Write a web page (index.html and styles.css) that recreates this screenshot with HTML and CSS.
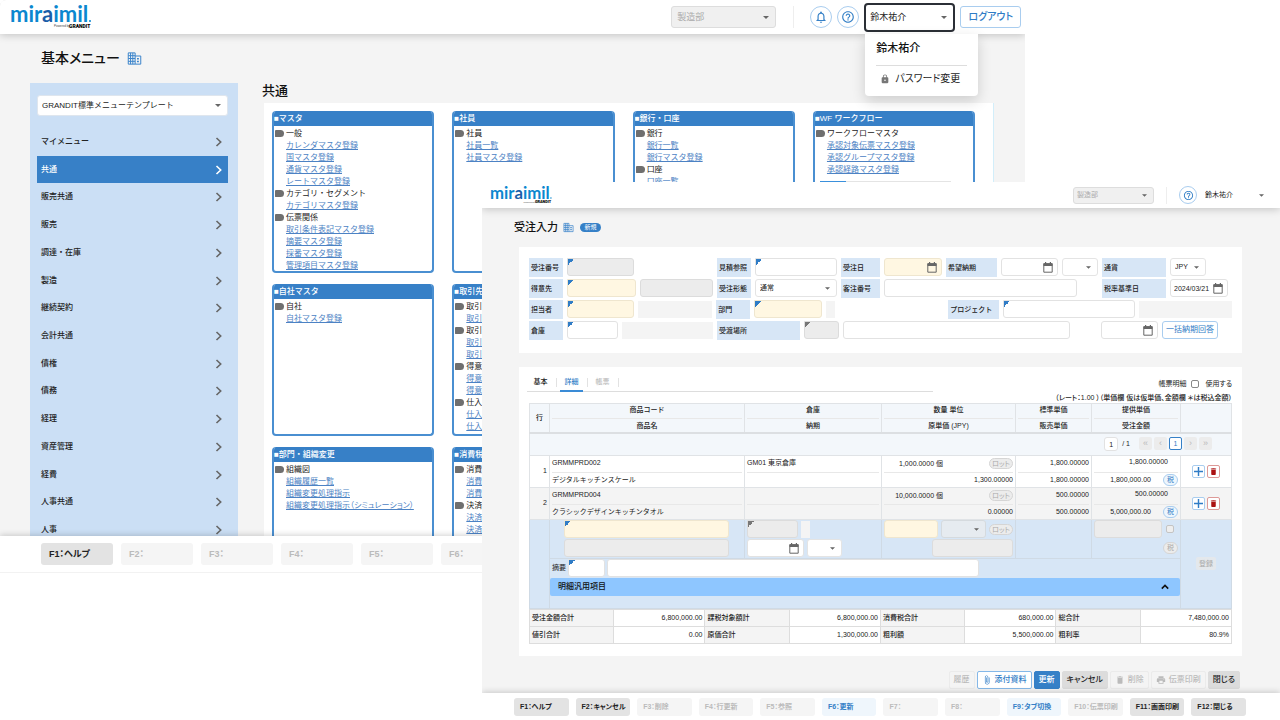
FILE: index.html
```html
<!DOCTYPE html>
<html lang="ja">
<head>
<meta charset="utf-8">
<title>miraimil</title>
<link rel="stylesheet" href="styles.css">
</head>
<body>
<svg class="defs" aria-hidden="true">
  <symbol id="logo" viewBox="0 -4 84 34">
    <text x="0" y="18" class="logo-word">mir<tspan class="logo-a">a</tspan>imil</text>
    <circle cx="80" cy="17" r="1" fill="#0b87cf"/>
    <text x="44" y="23" class="logo-by">Powered by</text>
    <text x="59" y="24" class="logo-brand">GRANDIT</text>
  </symbol>
  <symbol id="building" viewBox="0 0 24 24">
    <path fill="none" stroke="currentColor" stroke-width="1.600" d="M2 3h11v18H2zM13 8h9v13h-9M2 7.500h11M2 12h11M2 16.500h11M5.700 3v18M9.300 3v18"/>
    <path fill="currentColor" d="M16 11h3v2.500h-3zM16 15.500h3V18h-3z"/>
  </symbol>
  <symbol id="bell" viewBox="0 0 24 24">
    <path fill="currentColor" d="M12 22c1.100 0 2-.9 2-2h-4c0 1.100.9 2 2 2zm6-6v-5c0-3.070-1.630-5.640-4.500-6.320V4c0-.83-.67-1.500-1.500-1.500s-1.500.67-1.500 1.500v.68C7.640 5.360 6 7.920 6 11v5l-2 2v1h16v-1l-2-2zm-2 1H8v-6c0-2.480 1.510-4.500 4-4.500s4 2.020 4 4.500v6z"/>
  </symbol>
  <symbol id="help" viewBox="0 0 24 24">
    <path fill="currentColor" d="M11 18h2v-2h-2v2zm1-16C6.480 2 2 6.480 2 12s4.480 10 10 10 10-4.480 10-10S17.520 2 12 2zm0 18c-4.410 0-8-3.590-8-8s3.590-8 8-8 8 3.590 8 8-3.590 8-8 8zm0-14c-2.210 0-4 1.790-4 4h2c0-1.100.9-2 2-2s2 .9 2 2c0 2-3 1.750-3 5h2c0-2.250 3-2.500 3-5 0-2.210-1.790-4-4-4z"/>
  </symbol>
  <symbol id="lock" viewBox="0 0 24 24">
    <path fill="currentColor" d="M18 8h-1V6c0-2.760-2.240-5-5-5S7 3.240 7 6v2H6c-1.100 0-2 .9-2 2v10c0 1.100.9 2 2 2h12c1.100 0 2-.9 2-2V10c0-1.100-.9-2-2-2zm-6 9c-1.100 0-2-.9-2-2s.9-2 2-2 2 .9 2 2-.9 2-2 2zm3.100-9H8.900V6c0-1.710 1.390-3.100 3.100-3.100s3.100 1.390 3.100 3.100v2z"/>
  </symbol>
  <symbol id="chev" viewBox="0 0 10 10"><path fill="none" stroke="currentColor" stroke-width="1.600" d="M2.500 1l4.200 4-4.200 4"/></symbol>
  <symbol id="up" viewBox="0 0 10 10"><path fill="none" stroke="currentColor" stroke-width="2" d="M1 7l4-4 4 4"/></symbol>
  <symbol id="plus" viewBox="0 0 10 10"><path fill="none" stroke="currentColor" stroke-width="1.600" d="M5 0v10M0 5h10"/></symbol>
  <symbol id="trash" viewBox="0 0 24 24"><path fill="currentColor" d="M6 19c0 1.100.9 2 2 2h8c1.100 0 2-.9 2-2V7H6v12zM19 4h-3.500l-1-1h-5l-1 1H5v2h14V4z"/></symbol>
  <symbol id="clip" viewBox="0 0 24 24"><path fill="currentColor" d="M16.500 6v11.500c0 2.210-1.790 4-4 4s-4-1.790-4-4V5c0-1.380 1.120-2.500 2.500-2.500s2.500 1.120 2.500 2.500v10.500c0 .55-.45 1-1 1s-1-.45-1-1V6H10v9.500c0 1.380 1.120 2.500 2.500 2.500s2.500-1.120 2.500-2.500V5c0-2.210-1.790-4-4-4S7 2.790 7 5v12.500c0 3.040 2.460 5.500 5.500 5.500s5.500-2.460 5.500-5.500V6h-1.500z"/></symbol>
  <symbol id="print" viewBox="0 0 24 24"><path fill="currentColor" d="M19 8H5c-1.660 0-3 1.340-3 3v6h4v4h12v-4h4v-6c0-1.660-1.340-3-3-3zm-3 11H8v-5h8v5zm3-7c-.55 0-1-.45-1-1s.45-1 1-1 1 .45 1 1-.45 1-1 1zm-1-9H6v4h12V3z"/></symbol>
</svg>

<section class="window menu-window">
  <header class="bar">
    <svg class="logo" role="img" aria-label="miraimil Powered by GRANDIT"><use href="#logo"/></svg>
    <select class="dept" aria-label="部門" disabled><option>製造部</option></select>
    <span class="rule"></span>
    <button class="round" aria-label="通知"><svg><use href="#bell"/></svg></button>
    <button class="round" aria-label="ヘルプ"><svg><use href="#help"/></svg></button>
    <div class="user">
      <select class="user-select" aria-label="ユーザー"><option>鈴木祐介</option></select>
      <div class="popup">
        <p class="popup-name">鈴木祐介</p>
        <button class="popup-item"><svg><use href="#lock"/></svg>パスワード変更</button>
      </div>
    </div>
    <button class="logout">ログアウト</button>
  </header>
  <div class="page-title"><h1>基本メニュー</h1><svg><use href="#building"/></svg></div>
  <div class="menu-body">
    <nav class="side">
      <select class="template" aria-label="メニューテンプレート"><option>GRANDIT標準メニューテンプレート</option></select>
      <div class="side-list">
        <button>マイメニュー<svg><use href="#chev"/></svg></button>
        <button class="current">共通<svg><use href="#chev"/></svg></button>
        <button>販売共通<svg><use href="#chev"/></svg></button>
        <button>販売<svg><use href="#chev"/></svg></button>
        <button>調達・在庫<svg><use href="#chev"/></svg></button>
        <button>製造<svg><use href="#chev"/></svg></button>
        <button>継続契約<svg><use href="#chev"/></svg></button>
        <button>会計共通<svg><use href="#chev"/></svg></button>
        <button>債権<svg><use href="#chev"/></svg></button>
        <button>債務<svg><use href="#chev"/></svg></button>
        <button>経理<svg><use href="#chev"/></svg></button>
        <button>資産管理<svg><use href="#chev"/></svg></button>
        <button>経費<svg><use href="#chev"/></svg></button>
        <button>人事共通<svg><use href="#chev"/></svg></button>
        <button>人事<svg><use href="#chev"/></svg></button>
      </div>
    </nav>
    <main class="menu-main">
      <h2>共通</h2>
      <div class="cards">
        <section class="card"><h3>■マスタ</h3>
          <h4>一般</h4><a href="#">カレンダマスタ登録</a><a href="#">国マスタ登録</a><a href="#">通貨マスタ登録</a><a href="#">レートマスタ登録</a>
          <h4>カテゴリ・セグメント</h4><a href="#">カテゴリマスタ登録</a>
          <h4>伝票関係</h4><a href="#">取引条件表記マスタ登録</a><a href="#">摘要マスタ登録</a><a href="#">採番マスタ登録</a><a href="#">管理項目マスタ登録</a>
        </section>
        <section class="card"><h3>■社員</h3>
          <h4>社員</h4><a href="#">社員一覧</a><a href="#">社員マスタ登録</a>
        </section>
        <section class="card"><h3>■銀行・口座</h3>
          <h4>銀行</h4><a href="#">銀行一覧</a><a href="#">銀行マスタ登録</a>
          <h4>口座</h4><a href="#">口座一覧</a>
        </section>
        <section class="card"><h3>■WF ワークフロー</h3>
          <h4>ワークフローマスタ</h4><a href="#">承認対象伝票マスタ登録</a><a href="#">承認グループマスタ登録</a><a href="#">承認経路マスタ登録</a>
          <div class="track"><div class="thumb"></div></div>
        </section>
        <section class="card"><h3>■自社マスタ</h3>
          <h4>自社</h4><a href="#">自社マスタ登録</a>
        </section>
        <section class="card"><h3>■取引先</h3>
          <h4>取引</h4><a href="#">取引</a>
          <h4>取引</h4><a href="#">取引</a><a href="#">取引</a>
          <h4>得意先</h4><a href="#">得意先</a><a href="#">得意先</a>
          <h4>仕入先</h4><a href="#">仕入先</a><a href="#">仕入先</a>
        </section>
        <section class="card last-row"><h3>■部門・組織変更</h3>
          <h4>組織図</h4><a href="#">組織履歴一覧</a><a href="#">組織変更処理指示</a><a href="#" class="prop">組織変更処理指示（シミュレーション）</a>
        </section>
        <section class="card last-row second"><h3>■消費税</h3>
          <h4>消費税</h4><a href="#">消費税</a><a href="#">消費税</a>
          <h4>決済</h4><a href="#">決済</a><a href="#">決済</a>
        </section>
      </div>
    </main>
  </div>
  <footer class="keys">
    <button class="on">F1：ヘルプ</button><button disabled>F2：</button><button disabled>F3：</button><button disabled>F4：</button><button disabled>F5：</button><button disabled>F6：</button>
  </footer>
</section>

<section class="window order-window">
  <header class="bar">
    <svg class="logo" role="img" aria-label="miraimil Powered by GRANDIT"><use href="#logo"/></svg>
    <select class="dept" aria-label="部門" disabled><option>製造部</option></select>
    <span class="rule"></span>
    <button class="round" aria-label="ヘルプ"><svg><use href="#help"/></svg></button>
    <select class="user-select" aria-label="ユーザー"><option>鈴木祐介</option></select>
  </header>
  <div class="page-title"><h1>受注入力</h1><svg><use href="#building"/></svg><span class="badge">新規</span></div>

  <form class="panel head-form">
    <div class="line">
      <label class="w34" for="no">受注番号</label><input id="no" class="w67 mark off" readonly>
      <span class="w75"></span>
      <label class="w34" for="est">見積参照</label><input id="est" class="w82 mark">
      <label class="w39" for="odate">受注日</label><input id="odate" class="w58 date need">
      <label class="w51" for="due">希望納期</label><input id="due" class="w57 date"><select class="w36" aria-label="納期区分"><option></option></select>
      <label class="w64" for="cur">通貨</label><select id="cur" class="w36"><option>JPY</option></select>
      <span class="w22"></span>
    </div>
    <div class="line">
      <label class="w34" for="cust">得意先</label><input id="cust" class="w69 mark need"><input class="w73 off" aria-label="得意先名" readonly>
      <label class="w34" for="type">受注形態</label><select id="type" class="w82"><option>通常</option></select>
      <label class="w39" for="cno">客注番号</label><input id="cno" class="w193">
      <span class="w17"></span>
      <label class="w64" for="tdate">税率基準日</label><input id="tdate" class="w58 date" value="2024/03/21">
      <span class="w0"></span>
    </div>
    <div class="line">
      <label class="w34" for="staff">担当者</label><input id="staff" class="w67 mark need"><output class="w75"></output>
      <label class="w34" for="sec">部門</label><input id="sec" class="w68 mark need"><output class="w9"></output>
      <span class="w106"></span>
      <label class="w51" for="proj">プロジェクト</label><input id="proj" class="w133 mark"><output class="w93"></output>
    </div>
    <div class="line">
      <label class="w34" for="wh">倉庫</label><input id="wh" class="w51 mark"><output class="w91"></output>
      <label class="w83" for="place">受渡場所</label><input id="place" class="w35 mark off gray" readonly><input class="w227" aria-label="受渡場所名">
      <span class="w23"></span>
      <input class="w57 date" aria-label="一括納期"><button type="button" class="w56 outline">一括納期回答</button>
      <span class="w10"></span>
    </div>
  </form>

  <div class="panel detail">
    <div class="tab-row">
      <div class="tabs" role="tablist">
        <button role="tab">基本</button><button role="tab" class="active">詳細</button><button role="tab" disabled>帳票</button>
      </div>
      <label class="use">帳票明細<input type="checkbox">使用する</label>
    </div>
    <p class="rate">（レート：1.00 ）（単価欄 仮は仮単価、金額欄 ＊は税込金額）</p>
    <table class="grid">
      <colgroup><col class="c-no"><col><col class="c-wh"><col class="c-qty"><col class="c-price"><col class="c-amt"><col class="c-act"></colgroup>
      <thead>
        <tr><th>行</th>
          <th><div class="cell">商品コード</div><div class="cell">商品名</div></th>
          <th><div class="cell">倉庫</div><div class="cell">納期</div></th>
          <th><div class="cell">数量 単位</div><div class="cell">原単価 (JPY)</div></th>
          <th><div class="cell">標準単価</div><div class="cell">販売単価</div></th>
          <th><div class="cell">提供単価</div><div class="cell">受注金額</div></th>
          <th></th></tr>
      </thead>
      <tbody>
        <tr class="pager-row"><td colspan="7"><div class="pager">
          <input value="1" aria-label="ページ"><span>/ 1</span>
          <button disabled>«</button><button disabled>‹</button><button class="page">1</button><button disabled>›</button><button disabled>»</button>
        </div></td></tr>
        <tr class="item"><td class="num">1</td>
          <td><div class="cell">GRMMPRD002</div><div class="cell">デジタルキッチンスケール</div></td>
          <td><div class="cell">GM01 東京倉庫</div><div class="cell"></div></td>
          <td class="num"><div class="cell qty"><span>1,000.0000 個</span><button class="pill" disabled>ロット</button></div><div class="cell">1,300.00000</div></td>
          <td class="num"><div class="cell">1,800.00000</div><div class="cell">1,800.00000</div></td>
          <td class="num"><div class="cell unit">1,800.00000</div><div class="cell amt">1,800,000.00<button class="pill tax">税</button></div></td>
          <td><div class="acts"><button class="add" aria-label="追加"><svg><use href="#plus"/></svg></button><button class="del" aria-label="削除"><svg><use href="#trash"/></svg></button></div></td></tr>
        <tr class="item alt"><td class="num">2</td>
          <td><div class="cell">GRMMPRD004</div><div class="cell">クラシックデザインキッチンタオル</div></td>
          <td><div class="cell"></div><div class="cell"></div></td>
          <td class="num"><div class="cell qty"><span>10,000.0000 個</span><button class="pill" disabled>ロット</button></div><div class="cell">0.00000</div></td>
          <td class="num"><div class="cell">500.00000</div><div class="cell">500.00000</div></td>
          <td class="num"><div class="cell unit">500.00000</div><div class="cell amt">5,000,000.00<button class="pill tax">税</button></div></td>
          <td><div class="acts"><button class="add" aria-label="追加"><svg><use href="#plus"/></svg></button><button class="del" aria-label="削除"><svg><use href="#trash"/></svg></button></div></td></tr>
        <tr class="edit"><td rowspan="2"></td>
          <td><div class="stack code"><input class="mark need" aria-label="商品コード"><input class="off" aria-label="商品名" readonly></div></td>
          <td><div class="stack"><div class="pair"><input class="mark off gray w52" aria-label="倉庫" readonly><output class="w9"></output><span class="w67"></span></div>
            <div class="pair"><input class="date w57" aria-label="納期"><select class="w36" aria-label="納期区分"><option></option></select><span class="w34"></span></div></div></td>
          <td><div class="stack"><div class="pair"><input class="need w54" aria-label="数量"><select class="w45" aria-label="単位" disabled><option></option></select><button class="pill" disabled>ロット</button></div>
            <div class="pair"><span class="w45"></span><input class="off w82" aria-label="原単価" readonly></div></div></td>
          <td></td>
          <td><div class="stack"><div class="pair"><input class="off w69" aria-label="提供単価" readonly><input type="checkbox" aria-label="仮単価" disabled></div>
            <div class="pair end"><button class="pill tax" disabled>税</button></div></div></td>
          <td rowspan="2"><button class="regist" disabled>登録</button></td></tr>
        <tr class="edit"><td colspan="5" class="memo-cell">
          <div class="memo"><label for="memo">摘要</label><input id="memo" class="mark w37"><input class="w374" aria-label="摘要内容"><span class="w200"></span></div>
          <button class="fold">明細汎用項目<svg><use href="#up"/></svg></button></td></tr>
      </tbody>
    </table>
    <table class="totals">
      <tr><th>受注金額合計</th><td>6,800,000.00</td><th>課税対象額計</th><td>6,800,000.00</td><th>消費税合計</th><td>680,000.00</td><th>総合計</th><td>7,480,000.00</td></tr>
      <tr><th>値引合計</th><td>0.00</td><th>原価合計</th><td>1,300,000.00</td><th>粗利額</th><td>5,500,000.00</td><th>粗利率</th><td>80.9%</td></tr>
    </table>
  </div>

  <div class="commands">
    <button disabled>履歴</button>
    <button class="attach"><svg><use href="#clip"/></svg>添付資料</button>
    <button class="primary">更新</button>
    <button class="plain">キャンセル</button>
    <button disabled><svg><use href="#trash"/></svg>削除</button>
    <button disabled><svg><use href="#print"/></svg>伝票印刷</button>
    <button class="plain">閉じる</button>
  </div>
  <footer class="keys">
    <button class="on">F1：ヘルプ</button><button class="on">F2：キャンセル</button><button disabled>F3：削除</button><button disabled>F4：行更新</button><button disabled>F5：参照</button><button class="blue">F6：更新</button><button disabled>F7：</button><button disabled>F8：</button><button class="blue">F9：タブ切換</button><button disabled>F10：伝票印刷</button><button class="on">F11：画面印刷</button><button class="on">F12：閉じる</button>
  </footer>
</section>
</body>
</html>
```
FILE: styles.css
```css
* { box-sizing: border-box; }
body {
  margin: 0;
  min-height: 100vh;
  position: relative;
  overflow: hidden;
  background: #fff;
  color: #222;
  font: 8px/12px "Liberation Sans", "Noto Sans CJK JP", sans-serif;
}
h1, h2, h3, h4, p { margin: 0; font-weight: 500; }
button, input, select { font: inherit; color: inherit; margin: 0; padding: 0; min-width: 0; }
button { border: 0; background: none; white-space: nowrap; }
svg { display: block; flex: none; }
.defs { position: absolute; width: 0; height: 0; }

.logo-word { font: bold 22px Lato, sans-serif; fill: #0b87cf; }
.logo-a { fill: #1b5ea8; }
.logo-by { font: 3px "Liberation Sans", sans-serif; fill: #444; }
.logo-brand { font: 900 5px Roboto, sans-serif; fill: #000; }

select {
  appearance: none;
  border: 1px solid #ddd;
  border-radius: 3px;
  background: #fff url("data:image/svg+xml,%3Csvg xmlns='http://www.w3.org/2000/svg' viewBox='0 0 8 4'%3E%3Cpath fill='%23666' d='M0 0h8L4 4z'/%3E%3C/svg%3E") no-repeat right 6px center / 6px 3px;
}
select:disabled { background-color: #f0f0f0; color: #aaa; opacity: 1; }

/* Windows lie over each other on the desktop */
.window { position: absolute; display: flex; flex-direction: column; overflow: hidden; background: #f4f4f4; }
.menu-window { left: 0; top: 0; width: 80.1%; height: 573px; border-radius: 6px 0 0 0; border-bottom: 1px solid #f2f2f2; }
.order-window { left: 482px; right: 0; top: 182px; bottom: 0; font-size: 7px; line-height: 10px; }

.bar { display: flex; align-items: center; background: #fff; box-shadow: 0 1px 8px rgba(0, 0, 0, .22); flex: none; position: relative; }
.bar .logo { margin-right: auto; }
.rule { width: 1px; background: #eee; }
.round { display: grid; place-items: center; border: 1px solid #a9cdef; border-radius: 50%; color: #3580c7; background: #fff; }
.page-title { display: flex; align-items: center; color: #111; flex: none; }
.page-title svg { color: #3c85cb; }

/* Menu window */
.menu-window .bar { height: 34px; padding: 0 4px 0 10px; gap: 5px; }
.menu-window .logo { width: 84px; height: 34px; }
.menu-window .dept { width: 105px; height: 22px; padding-left: 5px; font-size: 9px; margin-right: 12px; }
.menu-window .rule { height: 22px; margin-right: 11px; }
.menu-window .round { width: 22px; height: 22px; }
.menu-window .round svg { width: 14px; height: 14px; }
.user { position: relative; }
.user .user-select { display: block; width: 91px; height: 29px; padding-left: 4px; font-size: 9px; border: 2px solid #2b2f36; border-radius: 4px; }
.popup { position: absolute; top: 31px; left: 1px; width: 113px; height: 62px; padding: 6px 11px; background: #fff; border-radius: 0 0 4px 4px; box-shadow: 0 5px 14px rgba(0, 0, 0, .16); }
.popup-name { font-size: 11px; line-height: 16px; padding-bottom: 9px; border-bottom: 1px solid #ddd; color: #111; }
.popup-item { display: flex; align-items: center; gap: 5px; height: 26px; padding-left: 4px; font-size: 10px; font-feature-settings: "palt"; }
.popup-item svg { width: 10px; height: 10px; color: #777; }
.logout { width: 61px; height: 22px; border: 1px solid #a9cdef; border-radius: 3px; color: #2f7cc6; font-size: 10px; font-weight: 500; font-feature-settings: "palt"; background: #fff; }
.menu-window .page-title { height: 49px; padding-left: 41px; gap: 7px; }
.menu-window h1 { font-size: 14px; line-height: 22px; padding-bottom: 2px; font-feature-settings: "palt"; }
.menu-window .page-title svg { width: 15px; height: 15px; }
.menu-body { flex: 1; min-height: 0; display: flex; gap: 24px; padding: 0 31px 0 30px; overflow: hidden; }
.side { width: 208px; flex: none; background: #cbdff5; padding: 12px 10px 0 7px; height: 470px; }
.template { width: 100%; height: 21px; padding-left: 4px; border-color: #dfe6ee; }
.side-list { display: grid; grid-auto-rows: 1fr; height: 416px; margin-top: 12px; }
.side-list button { display: flex; align-items: center; justify-content: space-between; padding: 0 4px; text-align: left; font-weight: 500; }
.side-list svg { width: 10px; height: 10px; color: #666; }
.side-list .current { background: #3780c7; color: #fff; }
.side-list .current svg { color: #fff; }
.menu-main { flex: 1; }
.menu-main h2 { font-size: 13px; line-height: 16px; padding-bottom: 4px; color: #111; }
.cards { display: grid; grid-template-columns: repeat(4, 1fr); grid-auto-rows: 152px; grid-template-rows: 162px; gap: 11px 18px; margin-left: 2px; padding: 8px 18px 0 8px; background: #fff; border-right: 1px solid #d2eefa; height: 500px; }
.card { border: 2px solid #4a8fd1; border-top: 0; border-radius: 4px; overflow: hidden; background: #fff; }
.card h3 { background: #3780c7; color: #fff; font-size: 8px; line-height: 15px; padding-left: 1px; margin: 0 -1px 2px; }
.card h4 { display: flex; align-items: center; gap: 2px; font-size: 8px; font-weight: 400; line-height: 12px; }
.card h4::before { content: ""; width: 9px; height: 7px; margin: 0 0 2px 1px; background: #6f6f6f; border-radius: 1px 4px 4px 1px; }
.card a { display: block; padding-left: 12px; color: #4c82c4; line-height: 12px; }
.prop { font-feature-settings: "palt"; }
.last-row { grid-column: 1; }
.last-row.second { grid-column: 2; }
.card:nth-child(5) { grid-column: 1; }
.track { height: 2px; background: #e4e4e4; margin: 5px 22px 0 5px; }
.thumb { width: 20%; height: 100%; background: #3a90dc; }

/* Function keys */
.keys { display: flex; flex: none; background: #fff; box-shadow: 0 -1px 6px rgba(0, 0, 0, .18); position: relative; font-feature-settings: "palt"; }
.keys button { border-radius: 3px; background: #f5f5f5; color: #bbb; text-align: left; font-weight: 700; }
.keys .on { background: #e3e3e3; color: #222; }
.keys .blue { background: #eff6fc; color: #3580c7; }
.menu-window .keys { height: 36px; padding: 7px 41px; gap: 8px; }
.menu-window .keys button { width: 72px; height: 22px; padding-left: 8px; flex: none; font-size: 9px; }
.order-window .keys { height: 27px; padding: 5px 34px 0 32px; gap: 7px; margin-top: auto; }
.order-window .keys button { flex: 1; height: 18px; padding-left: 6px; }

/* Order window */
.order-window .bar { height: 26px; padding: 0 4px 0 8px; }
.order-window .logo { width: 64px; height: 26px; }
.order-window .dept { width: 81px; height: 17px; padding-left: 3px; }
.order-window .rule { height: 17px; margin: 0 12px; }
.order-window .round { width: 18px; height: 18px; }
.order-window .round svg { width: 11px; height: 11px; }
.order-window .user-select { width: 75px; height: 18px; border: 0; padding-left: 4px; margin-left: 4px; background-position: right 12px center; }
.order-window .page-title { height: 39px; padding-left: 32px; gap: 5px; }
.order-window h1 { font-size: 11px; line-height: 16px; padding-bottom: 1px; }
.order-window .page-title svg { width: 11px; height: 11px; }
.badge { background: #3580c7; color: #fff; border-radius: 5px; width: 21px; line-height: 9px; text-align: center; font-size: 6px; margin-left: 1px; }
.panel { margin: 0 38px 0 37px; background: #fff; padding: 10px; flex: none; }
.head-form { display: grid; gap: 1px; height: 106px; align-content: start; grid-auto-rows: 20px; }
.line { display: flex; align-items: center; gap: 4px; }
.line label { background: #d7e6f6; height: 19px; line-height: 19px; padding-left: 2px; white-space: nowrap; font-weight: 500; }
input:not([type="checkbox"]) { border: 1px solid #e2e2e2; border-radius: 3px; background-color: #fff; height: 18px; padding-left: 3px; background-repeat: no-repeat; }
.order-window .line select, .edit select { height: 18px; padding-left: 4px; border-color: #e4e4e4; }
.order-window select { background-size: 5px 3px; }
.order-window input.need { background-color: #fff7e2; border-color: #efe6cf; }
.order-window input.off { background-color: #ececec; border-color: #dcdcdc; }
.order-window input.mark { background-image: linear-gradient(135deg, #2f7cc6 50%, transparent 50%); background-size: 6px 6px; border-top-left-radius: 0; }
.order-window input.mark.gray { background-image: linear-gradient(135deg, #777 50%, transparent 50%); }
input.date { background-image: url("data:image/svg+xml,%3Csvg xmlns='http://www.w3.org/2000/svg' viewBox='0 0 10 11'%3E%3Cpath fill='none' stroke='%23666' d='M.8 1.800h8.400v8.400H.8z'/%3E%3Cpath fill='%23666' d='M.5 1.300h9V4h-9zM2 0h1.200v2H2zM6.800 0H8v2H6.800z'/%3E%3C/svg%3E"); background-size: 10px 11px; background-position: right 4px center; }
output { display: block; height: 17px; background: #f4f4f4; }
.outline { height: 18px; border: 1px solid #a9cdef; border-radius: 3px; color: #2f7cc6; font-size: 8px; }

/* Proportional widths inside a form line */
.w0 { flex: 0 1 0; } .w9 { flex: 9 1 9px; } .w10 { flex: 10 1 10px; } .w17 { flex: 17 1 17px; }
.w22 { flex: 22 1 22px; } .w23 { flex: 23 1 23px; } .w34 { flex: 34 1 34px; } .w35 { flex: 35 1 35px; } .w36 { flex: 36 1 36px; }
.w37 { flex: 37 1 37px; } .w39 { flex: 39 1 39px; } .w45 { flex: 45 1 45px; } .w51 { flex: 51 1 51px; } .w52 { flex: 52 1 52px; }
.w54 { flex: 54 1 54px; } .w56 { flex: 56 1 56px; } .w57 { flex: 57 1 57px; } .w58 { flex: 58 1 58px; } .w64 { flex: 64 1 64px; }
.w67 { flex: 67 1 67px; } .w68 { flex: 68 1 68px; } .w69 { flex: 69 1 69px; } .w73 { flex: 73 1 73px; } .w75 { flex: 75 1 75px; }
.w82 { flex: 82 1 82px; } .w83 { flex: 83 1 83px; } .w91 { flex: 91 1 91px; } .w93 { flex: 93 1 93px; } .w106 { flex: 106 1 106px; }
.w133 { flex: 133 1 133px; } .w193 { flex: 193 1 193px; } .w200 { flex: 200 1 200px; } .w227 { flex: 227 1 227px; } .w374 { flex: 374 1 374px; }

.detail { margin-top: 14px; padding-top: 7px; height: 289px; }
.tab-row { display: flex; justify-content: space-between; height: 18px; }
.tabs { display: flex; width: 57.7%; border-bottom: 1px solid #ddd; margin-left: -2px; }
.tabs button { width: 23px; margin: 0 6px 0 2px; position: relative; height: 18px; border-bottom: 2px solid transparent; font-weight: 500; }
.tabs button::after { content: ""; position: absolute; right: -5px; top: 4px; width: 1px; height: 9px; background: #e2e2e2; }
.tabs .active { color: #2f7cc6; border-color: #3a8bd6; }
.tabs button:disabled { color: #bbb; }
.use { display: flex; align-items: center; gap: 5px; height: 20px; font-feature-settings: "palt"; }
input[type="checkbox"] { appearance: none; width: 8px; height: 8px; border: 1px solid #888; border-radius: 2px; background: #fff; }
input[type="checkbox"]:disabled { border-color: #c4c4c4; background: #eee; }
.use input { margin-right: 1px; }
.rate { text-align: right; line-height: 11px; font-feature-settings: "palt"; }

table { width: 100%; border-collapse: collapse; table-layout: fixed; }
.grid td, .grid th, .totals td, .totals th { border: 1px solid #e0e3e6; padding: 0; }
.c-no { width: 20px; } .c-wh { width: 137px; } .c-qty { width: 134px; } .c-price { width: 76px; } .c-amt { width: 89px; } .c-act { width: 51px; }
.grid thead th { background: #f3f7fb; border-bottom: 2px solid #dcdfe2; font-weight: 500; height: 28px; }
.grid .cell { height: 16px; line-height: 14px; margin: 0 2px; white-space: nowrap; }
.grid th .cell { height: 14px; line-height: 12px; }
.grid .cell + .cell { border-top: 1px solid #e8e8e8; height: 15px; }
.grid th .cell + .cell { line-height: 14px; height: 14px; }
.pager-row td { background: #f3f7fb; height: 22px; }
.pager { display: flex; justify-content: flex-end; gap: 2px; padding-right: 19px; }
.pager input { width: 14px; height: 14px; text-align: center; padding: 0; margin-right: 2px; }
.pager span { line-height: 14px; margin-right: 7px; }
.pager button { width: 13px; height: 13px; background: #ececec; color: #bbb; border-radius: 2px; line-height: 11px; font-size: 9px; }
.pager .page { background: #fff; border: 1px solid #3580c7; color: #3580c7; font-size: 7px; }
.alt td { background: #f4f4f4; }
.num { text-align: right; }
.item > .num:first-child { padding-right: 2px; }
.cell.qty { display: flex; justify-content: flex-end; align-items: center; }
.qty span { margin-right: 46px; }
.grid .unit { padding-right: 10px; line-height: 12px; }
.amt { display: flex; justify-content: flex-end; align-items: center; gap: 12px; }
.pill { border-radius: 6px; border: 1px solid #d5d5d5; background: #ececec; color: #aaa; line-height: 9px; height: 11px; width: 24px; flex: none; text-align: center; font-feature-settings: "palt"; }
.pill.tax { width: 15px; height: 12px; line-height: 10px; }
.pill.tax:enabled { border-color: #a9cdef; background: #eef6fd; color: #2f7cc6; }
.acts { display: flex; gap: 2px; padding-left: 11px; }
.acts button { width: 13px; height: 13px; border: 1px solid #a9cdef; border-radius: 2px; background: #fff; display: grid; place-items: center; }
.acts svg { width: 9px; height: 9px; }
.add { color: #2f7cc6; }
.acts .del { border-color: #dd9a98; color: #ab1212; }
.edit td { background: #d7e6f6; border-color: #cfdae5; }
.edit:nth-child(4) > td { border-top-color: #c6ccd2; }
.edit .stack { display: grid; grid-template-columns: minmax(0, 1fr); gap: 1px; height: 38px; align-content: center; margin: 0 2px; }
.edit .stack.code { margin: 0 15px 0 14px; }
.edit .pair { display: flex; align-items: center; gap: 3px; height: 18px; }
.edit .pair.end { justify-content: flex-end; }
.edit select:disabled { background-color: #e6ebf0; border-color: #d5dade; }
.edit .off.w69 + input { flex: none; margin: 0 4px 0 1px; }
.memo-cell { vertical-align: top; }
.memo { display: flex; align-items: center; gap: 2px; padding: 0 0 1px 2px; }
.memo label { width: 14px; flex: none; white-space: nowrap; }
.fold { display: flex; width: 100%; align-items: center; justify-content: space-between; height: 18px; background: #8ec6ff; border-radius: 2px; padding: 0 11px 0 8px; color: #111; font-size: 8px; font-weight: 500; margin-bottom: 12px; }
.fold svg { width: 8px; height: 8px; }
.regist { display: block; width: 20px; height: 13px; margin: 0 auto; border-radius: 2px; background: #e4e8ec; color: #aaa; }
.totals th, .totals td { height: 17px; border-color: #ddd; }
.totals th { width: 12%; background: #f4f4f4; text-align: left; padding-left: 2px; font-weight: 500; }
.totals td { width: 13%; text-align: right; padding-right: 2px; }

.commands { display: flex; justify-content: flex-end; gap: 2px; padding: 15px 40px 0 0; font-feature-settings: "palt"; }
.commands button { display: flex; align-items: center; gap: 3px; height: 18px; padding: 0 4px; border: 1px solid #ebebeb; border-radius: 2px; font-size: 8px; color: #bbb; font-weight: 500; }
.commands svg { width: 10px; height: 10px; }
.commands .attach { border-color: #85b8e8; background: #fff; color: #2f7cc6; }
.commands .primary { background: #3580c7; border-color: #3580c7; color: #fff; }
.commands .plain { background: #dcdcdc; border-color: #dcdcdc; color: #222; }
```
